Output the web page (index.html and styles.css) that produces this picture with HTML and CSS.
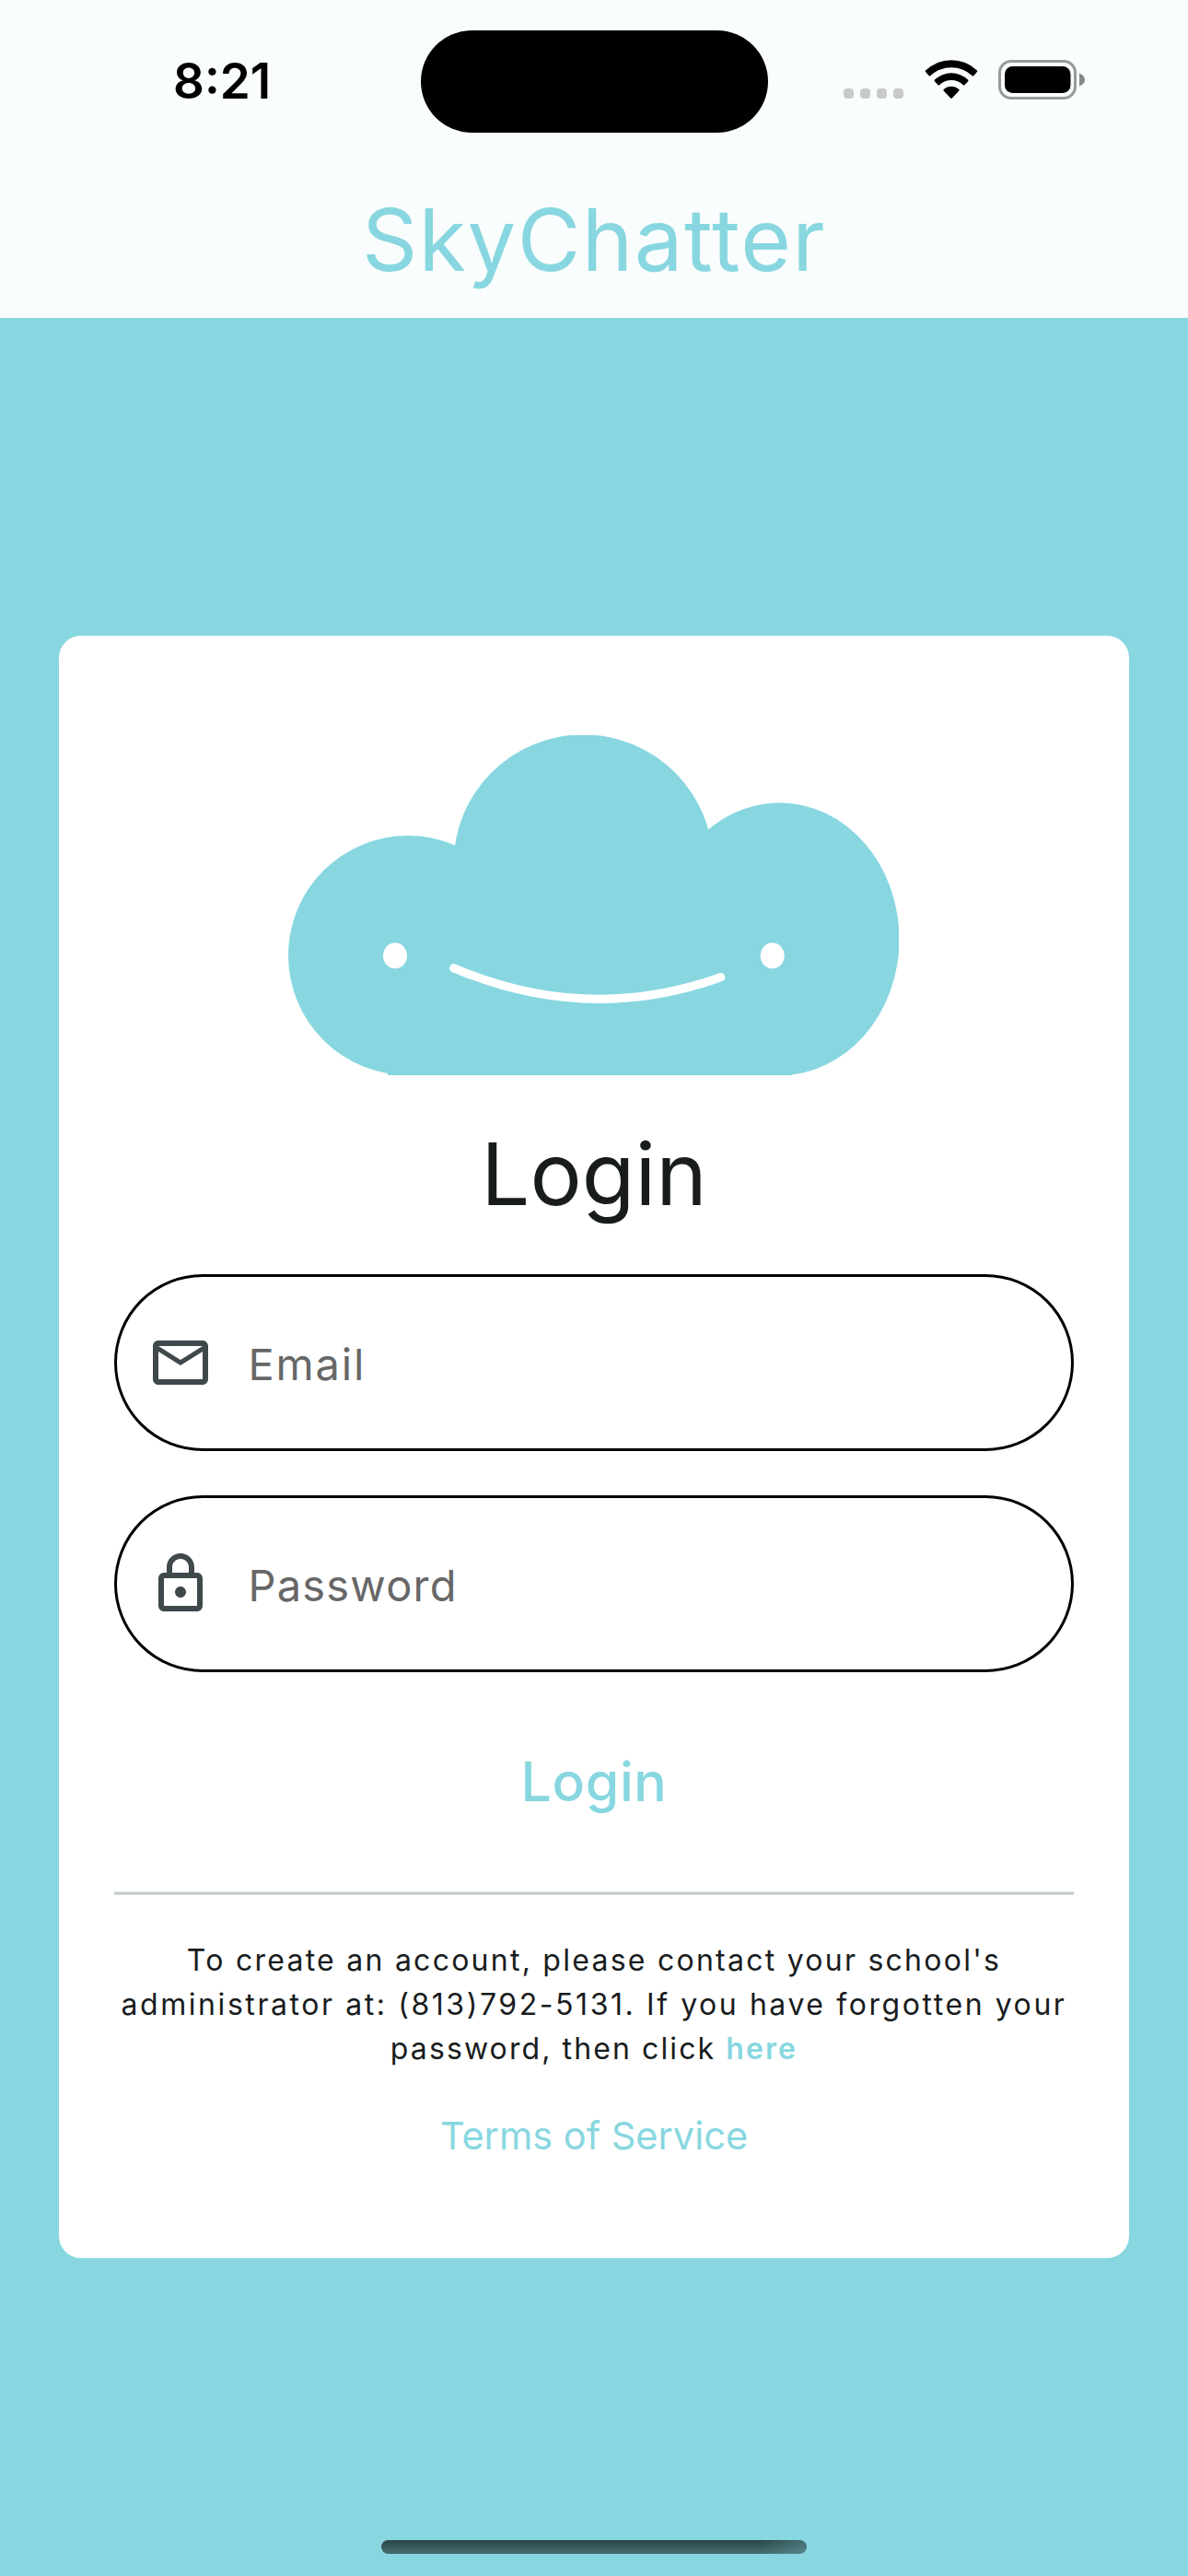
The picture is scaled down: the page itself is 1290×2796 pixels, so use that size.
FILE: index.html
```html
<!DOCTYPE html>
<html lang="en">
<head>
<meta charset="utf-8">
<title>SkyChatter</title>
<link rel="stylesheet" href="styles.css">
</head>
<body>
<div class="screen">
  <header class="header">
    <div class="status">
      <div class="status-side"><span class="time">8:21</span></div>
      <div class="island"></div>
      <div class="status-side status-icons">
        <span class="dots"><i></i><i></i><i></i><i></i></span>
        <svg class="wifi" width="58" height="43" viewBox="0 0 58 43">
          <path d="M1.3 13.3Q.2 12.200 1.300 11.200A40.500 40.500 0 0 1 56.700 11.200Q57.800 12.200 56.700 13.300L53.500 17Q52.500 18 51.500 17A33 33 0 0 0 6.500 17Q5.500 18 4.500 17Z"/>
          <path d="M11 23.500Q10 22.500 11 21.600A26 26 0 0 1 47 21.600Q48 22.500 47 23.500L43.600 27Q42.600 28 41.600 27A18.500 18.500 0 0 0 16.400 27Q15.400 28 14.400 27Z"/>
          <path d="M20.800 33.700Q19.800 32.700 20.900 31.700A13 13 0 0 1 37.100 31.700Q38.200 32.700 37.200 33.700L30 41.200Q29 42.200 28 41.200Z"/>
        </svg>
        <svg class="battery" width="95" height="43" viewBox="0 0 95 43">
          <rect x="1.500" y="1.500" width="82" height="40" rx="12.500" fill="none" stroke="#989b9b" stroke-width="3"/>
          <rect x="7" y="7" width="71.500" height="29" rx="8.500"/>
          <path d="M88 14.500Q94 17 94 21.500T88 28.500Z" fill="#868989"/>
        </svg>
      </div>
    </div>
    <h1 class="brand"><span>SkyChatter</span></h1>
  </header>

  <main class="card">
    <svg class="logo" width="663" height="369" viewBox="313 798 663 369">
      <g fill="#88d7e0">
        <circle cx="443" cy="1037" r="130"/>
        <circle cx="633.400" cy="938.300" r="141"/>
        <ellipse cx="846.500" cy="1019.300" rx="130" ry="148"/>
        <path d="M421 1167V1000L494 917.700L634 880L769.300 901L860 1000V1167Z"/>
      </g>
      <ellipse cx="429" cy="1037.300" rx="13" ry="14" fill="#fff"/>
      <ellipse cx="838.700" cy="1037.300" rx="13" ry="14" fill="#fff"/>
      <path d="M492.700 1050.700Q638 1112.500 782.700 1060.700" fill="none" stroke="#fff" stroke-width="9.300" stroke-linecap="round"/>
    </svg>
    <h2 class="title"><span>Login</span></h2>
    <div class="fields">
      <label class="field">
        <svg class="icon" width="72" height="72" viewBox="0 0 24 24"><path d="M22 6c0-1.100-.9-2-2-2H4c-1.100 0-2 .9-2 2v12c0 1.100.9 2 2 2h16c1.100 0 2-.9 2-2V6zm-2 0l-8 5-8-5h16zm0 12H4V8l8 5 8-5v10z"/></svg>
        <span class="hint hint-email">Email</span>
      </label>
      <label class="field">
        <svg class="icon" width="72" height="72" viewBox="0 0 24 24"><path d="M18 8h-1V6c0-2.760-2.240-5-5-5S7 3.240 7 6v2H6c-1.100 0-2 .9-2 2v10c0 1.100.9 2 2 2h12c1.100 0 2-.9 2-2V10c0-1.100-.9-2-2-2zM9 6c0-1.660 1.340-3 3-3s3 1.340 3 3v2H9V6zm9 14H6V10h12v10zm-6-3c1.100 0 2-.9 2-2s-.9-2-2-2-2 .9-2 2 .9 2 2 2z"/></svg>
        <span class="hint">Password</span>
      </label>
    </div>
    <button class="submit"><span>Login</span></button>
    <hr class="divider">
    <p class="help"><span class="line-1">To create an account, please contact your school's</span><br><span class="line-2">administrator at: (813)792-5131. If you have forgotten your</span><br><span class="line-3">password, then click <a class="here">here</a></span></p>
    <a class="terms">Terms of Service</a>
  </main>
  <div class="home"></div>
</div>
</body>
</html>
```
FILE: styles.css
```css
* { box-sizing: border-box; }
body { margin: 0; font-family: Inter, "Liberation Sans", sans-serif; }
.screen {
  width: 1290px;
  height: 2796px;
  display: flex;
  flex-direction: column;
  align-items: center;
  background: #88d7e0;
  overflow: hidden;
}
.header { width: 100%; height: 345px; flex: none; background: #fafdfd; }
.status { height: 176px; padding-top: 33px; display: flex; align-items: flex-start; }
.status-side { flex: none; width: 456.500px; height: 111px; display: flex; }
.time {
  margin: 25px 0 0 188px;
  font-size: 53px;
  line-height: 60px;
  font-weight: 600;
  letter-spacing: 0;
}
.island { width: 377px; height: 111px; border-radius: 56px; background: #000; }
.status-icons { padding: 32px 0 0 82.500px; align-items: flex-start; }
.dots { display: flex; gap: 7px; margin: 31px 23px 0 0; }
.dots i { width: 11px; height: 11px; border-radius: 4px; background: #c8caca; }
.wifi { margin-right: 22px; }
.brand {
  margin: 0;
  text-align: center;
  font-size: 94px;
  line-height: 168px;
  font-weight: 400;
  letter-spacing: 1.400px;
  color: #88d7e0;
}
.card {
  width: 1162px;
  height: 1761px;
  margin-top: 345px;
  padding: 108px 60px 0;
  border-radius: 24px;
  background: #fff;
  display: flex;
  flex-direction: column;
  align-items: center;
  color: #191c1d;
}
.logo { flex: none; margin-right: 1px; }
.title { margin: 52px 0 54px; font-size: 94px; line-height: 110px; font-weight: 400; }
.fields { width: 100%; display: flex; flex-direction: column; gap: 48px; }
.field {
  height: 192px;
  border: 3px solid #000;
  border-radius: 96px;
  padding-left: 33px;
  display: flex;
  align-items: center;
}
.icon { fill: #3f484a; }
.hint {
  margin: 4px 0 0 37.500px;
  font-size: 47px;
  line-height: 60px;
  letter-spacing: 1.200px;
  color: #676767;
}
.hint-email { letter-spacing: 1.800px; }
.submit {
  border: 0;
  padding: 0;
  background: none;
  height: 238px;
  font: 500 59px/70px Inter, sans-serif;
  letter-spacing: .6px;
  color: #88d7e0;
}
.divider {
  width: 100%;
  height: 4px;
  margin: 0;
  border: solid #dfe4e5;
  border-width: 1px 0;
  background: #bfc8ca;
}
.help {
  margin: 47px 0 40px;
  font-size: 32px;
  line-height: 48px;
  text-align: center;
  white-space: nowrap;
}
.line-1 { letter-spacing: 2.250px; }
.line-2 { letter-spacing: 2.570px; }
.line-3 { letter-spacing: 2.100px; }
.here { font-weight: 600; color: #88d7e0; }
.terms { font-size: 41.500px; line-height: 60px; color: #88d7e0; }
.home {
  width: 462px;
  height: 15px;
  margin-top: 306px;
  border-radius: 8px;
  background:
    linear-gradient(115deg, transparent 88%, rgba(100, 160, 165, .5)),
    linear-gradient(#2a4648, #466c6f);
}
```
